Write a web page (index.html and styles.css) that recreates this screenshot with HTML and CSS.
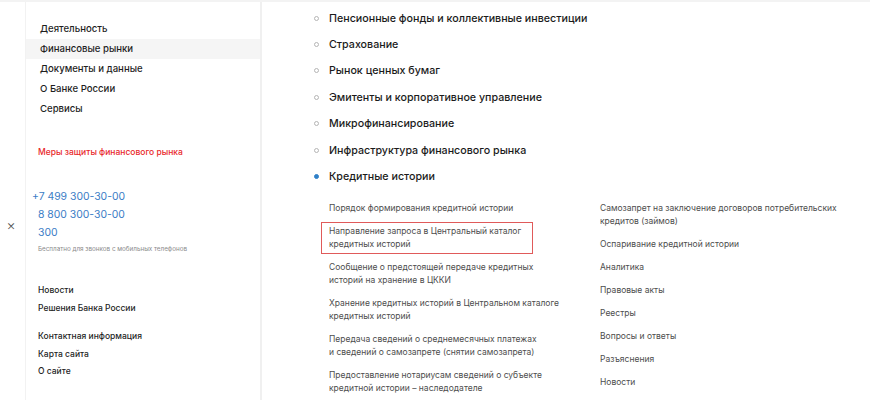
FILE: index.html
```html
<!DOCTYPE html>
<html lang="ru">
<head>
<meta charset="utf-8">
<link rel="stylesheet" href="styles.css">
</head>
<body>
<div class="page">
  <div class="gutter"><span class="close">×</span></div>
  <aside class="sidebar">
    <nav class="menu">
      <a href="#">Деятельность</a>
      <a href="#" class="active">Финансовые рынки</a>
      <a href="#">Документы и данные</a>
      <a href="#">О Банке России</a>
      <a href="#">Сервисы</a>
    </nav>
    <a href="#" class="alert">Меры защиты финансового рынка</a>
    <div class="phones">
      <a href="#" class="phone plus">+7 499 300-30-00</a>
      <a href="#" class="phone">8 800 300-30-00</a>
      <a href="#" class="phone">300</a>
      <div class="caption">Бесплатно для звонков с мобильных телефонов</div>
    </div>
    <div class="links">
      <a href="#">Новости</a>
      <a href="#">Решения Банка России</a>
    </div>
    <div class="links second">
      <a href="#">Контактная информация</a>
      <a href="#">Карта сайта</a>
      <a href="#">О сайте</a>
    </div>
  </aside>
  <main class="main">
    <ul class="sections">
      <li><span class="dot"></span>Пенсионные фонды и коллективные инвестиции</li>
      <li><span class="dot"></span>Страхование</li>
      <li><span class="dot"></span>Рынок ценных бумаг</li>
      <li><span class="dot"></span>Эмитенты и корпоративное управление</li>
      <li><span class="dot"></span>Микрофинансирование</li>
      <li><span class="dot"></span>Инфраструктура финансового рынка</li>
      <li class="current"><span class="dot"></span>Кредитные истории</li>
    </ul>
    <div class="sub">
      <div class="col">
        <a href="#">Порядок формирования кредитной истории</a>
        <a href="#" class="marked">Направление запроса в Центральный каталог<br>кредитных историй</a>
        <a href="#">Сообщение о предстоящей передаче кредитных<br>историй на хранение в ЦККИ</a>
        <a href="#">Хранение кредитных историй в Центральном каталоге<br>кредитных историй</a>
        <a href="#">Передача сведений о среднемесячных платежах<br>и сведений о самозапрете (снятии самозапрета)</a>
        <a href="#">Предоставление нотариусам сведений о субъекте<br>кредитной истории – наследодателе</a>
      </div>
      <div class="col">
        <a href="#">Самозапрет на заключение договоров потребительских<br>кредитов (займов)</a>
        <a href="#">Оспаривание кредитной истории</a>
        <a href="#">Аналитика</a>
        <a href="#">Правовые акты</a>
        <a href="#">Реестры</a>
        <a href="#">Вопросы и ответы</a>
        <a href="#">Разъяснения</a>
        <a href="#">Новости</a>
      </div>
    </div>
  </main>
</div>
</body>
</html>
```

FILE: styles.css
```css
* { box-sizing: border-box; }
html, body { margin: 0; padding: 0; }
body {
  background: #fff;
  font-family: Inter, "Noto Sans", "Liberation Sans", sans-serif;
  color: #1f1f1f;
  width: 870px;
  height: 400px;
  overflow: hidden;
}
a { text-decoration: none; color: inherit; }
.page {
  display: flex;
  height: 400px;
  border-top: 2px solid #f3f3f3;
}
.gutter {
  width: 25px;
  display: flex;
  justify-content: center;
  padding-top: 213px;
  padding-right: 3px;
}
.close {
  font-size: 14px;
  line-height: 20px;
  color: #555;
  font-weight: 300;
}
.sidebar {
  width: 237px;
  border-left: 1px solid #f2f2f2;
  border-right: 2px solid #f0f0f0;
  padding: 17px 0 0 0;
  display: flex;
  flex-direction: column;
}
.menu a {
  display: block;
  height: 20px;
  line-height: 20px;
  padding-left: 14px;
  font-size: 9.6px;
  font-weight: 500;
  color: #1f1f1f;
}
.menu a.active { background: #f5f5f5; }
.alert {
  margin: 26px 0 0 12px;
  font-size: 8.5px;
  line-height: 14px;
  font-weight: 500;
  color: #e8282b;
}
.phones {
  margin-top: 29px;
  padding-left: 12px;
  display: flex;
  flex-direction: column;
  align-items: flex-start;
}
.phone {
  font-size: 10.4px;
  line-height: 18px;
  color: #3c7dc6;
}
.phone.plus { margin-left: -6px; }
.caption {
  margin-top: 2px;
  font-size: 6.3px;
  line-height: 10px;
  color: #8a8a8a;
}
.links {
  margin-top: 27px;
  padding-left: 12px;
  display: flex;
  flex-direction: column;
}
.links.second { margin-top: 11px; }
.links a {
  font-size: 8.5px;
  line-height: 18px;
  font-weight: 500;
  color: #1f1f1f;
}
.links.second a { line-height: 17.5px; }
.main {
  flex: 1;
  padding: 3px 0 0 52px;
}
.sections {
  list-style: none;
  margin: 0;
  padding: 0;
}
.sections li {
  display: flex;
  align-items: center;
  height: 26.4px;
  font-size: 10.7px;
  font-weight: 500;
  color: #1b1b1b;
}
.dot {
  width: 5px;
  height: 5px;
  border-radius: 50%;
  border: 1.3px solid #b5b5b5;
  margin-right: 10px;
  flex: none;
}
.current .dot {
  background: #2f80c8;
  border-color: #2f80c8;
}
.sub {
  display: grid;
  grid-template-columns: 271px 1fr;
  margin-top: 9px;
  padding-left: 14px;
}
.col {
  display: flex;
  flex-direction: column;
  align-items: flex-start;
  gap: 4px;
}
.col a {
  font-size: 8.5px;
  line-height: 13px;
  color: #4d4d4d;
  padding: 2px 7px;
  margin-left: -7px;
  border: 1px solid transparent;
  white-space: nowrap;
}
.col a.marked {
  border-color: #e05a5a;
  padding-right: 11px;
}
```
